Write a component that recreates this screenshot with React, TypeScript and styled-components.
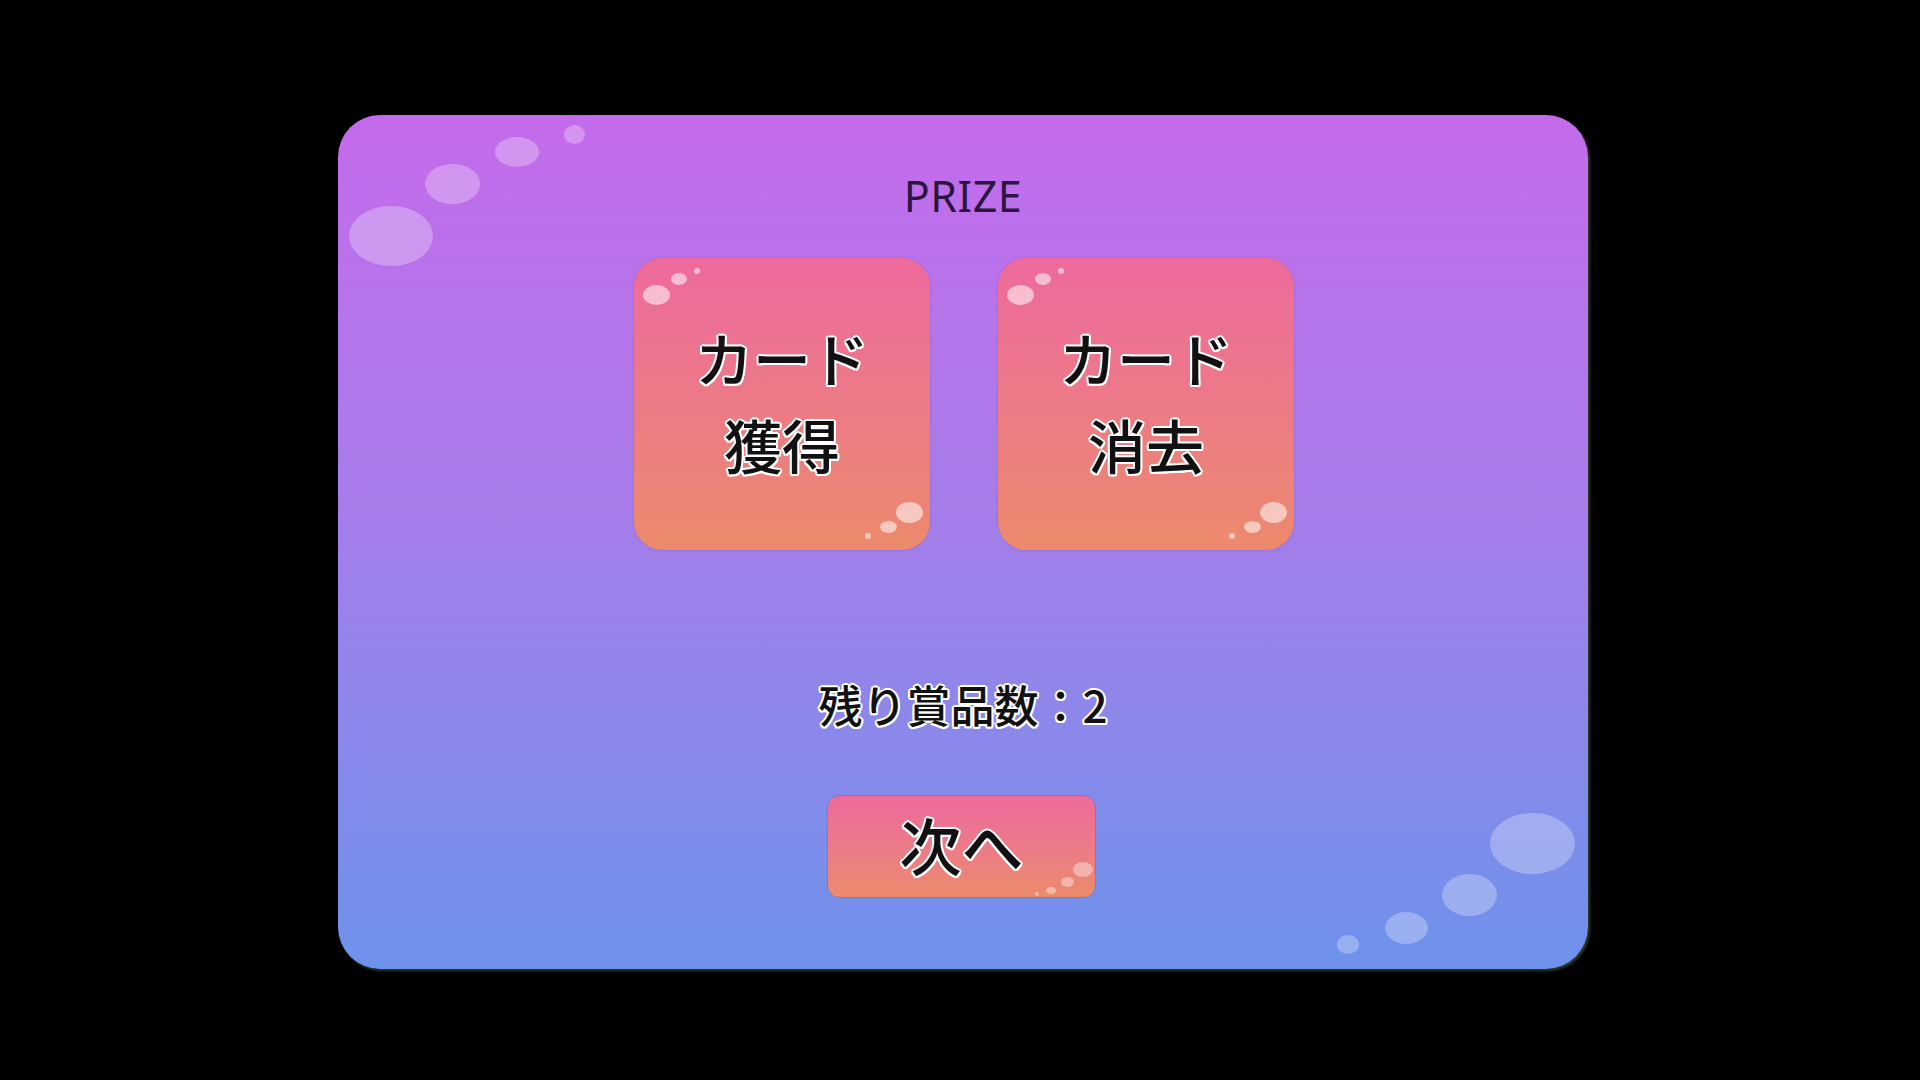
import styled, { createGlobalStyle } from 'styled-components';

const GlobalStyle = createGlobalStyle`
  html, body {
    margin: 0;
    padding: 0;
    background: #000;
  }
  body {
    font-family: 'Noto Sans CJK JP', 'Noto Sans', sans-serif;
  }
`;

const outline = `
  text-shadow:
    2px 0 0 #fff, -2px 0 0 #fff, 0 2px 0 #fff, 0 -2px 0 #fff,
    1.5px 1.5px 0 #fff, -1.5px 1.5px 0 #fff, 1.5px -1.5px 0 #fff, -1.5px -1.5px 0 #fff,
    0 0 3px #fff;
`;

const Screen = styled.div`
  width: 1920px;
  height: 1080px;
  display: flex;
  align-items: center;
  justify-content: center;
  background: #000;
  overflow: hidden;
`;

const Panel = styled.div`
  position: relative;
  width: 1250px;
  height: 854px;
  margin-top: 4px;
  margin-left: 6px;
  border-radius: 42px;
  background: linear-gradient(180deg, #c46beb 0%, #a77ce9 45%, #8b88ea 72%, #6d92ec 100%);
  box-shadow: 2px 2px 3px rgba(90, 110, 70, 0.55);
  display: flex;
  flex-direction: column;
  align-items: center;
  padding-top: 55px;
  box-sizing: border-box;
  overflow: hidden;
`;

const Bubble = styled.div<{ $x: number; $y: number; $w: number; $h: number; $alpha?: number }>`
  position: absolute;
  left: ${({ $x }) => $x}px;
  top: ${({ $y }) => $y}px;
  width: ${({ $w }) => $w}px;
  height: ${({ $h }) => $h}px;
  border-radius: 50%;
  background: rgba(255, 255, 255, ${({ $alpha }) => $alpha ?? 0.28});
  pointer-events: none;
`;

const Title = styled.div`
  font-family: 'Noto Sans', 'Open Sans', sans-serif;
  font-size: 43px;
  line-height: 52px;
  color: #2b1640;
  letter-spacing: 0.5px;
  position: relative;
`;

const CardRow = styled.div`
  display: flex;
  gap: 68px;
  margin-top: 36px;
  margin-left: 2px;
`;

const Card = styled.button`
  position: relative;
  width: 296px;
  height: 292px;
  border: none;
  border-radius: 28px;
  background: linear-gradient(180deg, #ed6a9c 0%, #ec7a87 50%, #ec8a6c 100%);
  box-shadow: 0 0 2px rgba(80, 50, 110, 0.35);
  display: flex;
  flex-direction: column;
  align-items: center;
  justify-content: center;
  padding: 0 0 6px;
  cursor: pointer;
  font-family: 'Noto Sans CJK JP', sans-serif;
  overflow: hidden;
`;

const CardLine = styled.span`
  font-size: 58px;
  font-weight: 500;
  line-height: 87px;
  color: #111;
  ${outline}
`;

const Remaining = styled.div`
  margin-top: 124px;
  font-size: 44px;
  font-weight: 500;
  line-height: 60px;
  color: #111;
  ${outline}
`;

const NextButton = styled.button`
  position: relative;
  margin-top: 61px;
  margin-left: -3px;
  width: 269px;
  height: 103px;
  border: 1px solid #5d86d6;
  border-radius: 12px;
  background: linear-gradient(180deg, #ed6a9c 0%, #ec7c86 55%, #ec8b6c 100%);
  display: flex;
  align-items: center;
  justify-content: center;
  cursor: pointer;
  font-family: 'Noto Sans CJK JP', sans-serif;
  font-size: 62px;
  font-weight: 500;
  color: #111;
  padding: 0 0 6px;
  overflow: hidden;
  ${outline}
`;

const cardBubbles = [
  { x: 9, y: 27, w: 27, h: 20, a: 0.55 },
  { x: 37, y: 15, w: 16, h: 12, a: 0.55 },
  { x: 60, y: 10, w: 6, h: 6, a: 0.55 },
  { x: 262, y: 244, w: 27, h: 21, a: 0.55 },
  { x: 246, y: 263, w: 17, h: 12, a: 0.55 },
  { x: 231, y: 275, w: 6, h: 6, a: 0.55 },
];

const nextBubbles = [
  { x: 245, y: 66, w: 20, h: 15 },
  { x: 233, y: 81, w: 13, h: 10 },
  { x: 218, y: 91, w: 10, h: 7 },
  { x: 207, y: 96, w: 4, h: 4 },
];

const panelBubbles = [
  { x: 11, y: 91, w: 84, h: 60 },
  { x: 87, y: 49, w: 55, h: 40 },
  { x: 157, y: 22, w: 44, h: 30 },
  { x: 226, y: 10, w: 21, h: 19 },
  { x: 1152, y: 698, w: 85, h: 61 },
  { x: 1104, y: 759, w: 55, h: 42 },
  { x: 1047, y: 797, w: 43, h: 32 },
  { x: 999, y: 820, w: 22, h: 19 },
];

const cards = [
  ['カード', '獲得'],
  ['カード', '消去'],
];

const App = () => {
  return (
    <>
      <GlobalStyle />
      <Screen>
        <Panel>
          {panelBubbles.map((b, i) => (
            <Bubble key={i} $x={b.x} $y={b.y} $w={b.w} $h={b.h} />
          ))}
          <Title>PRIZE</Title>
          <CardRow>
            {cards.map((lines) => (
              <Card key={lines.join('')}>
                {cardBubbles.map((b, i) => (
                  <Bubble key={i} $x={b.x} $y={b.y} $w={b.w} $h={b.h} $alpha={b.a} />
                ))}
                {lines.map((line) => (
                  <CardLine key={line}>{line}</CardLine>
                ))}
              </Card>
            ))}
          </CardRow>
          <Remaining>残り賞品数：2</Remaining>
          <NextButton>
            {nextBubbles.map((b, i) => (
              <Bubble key={i} $x={b.x} $y={b.y} $w={b.w} $h={b.h} $alpha={0.4} />
            ))}
            次へ
          </NextButton>
        </Panel>
      </Screen>
    </>
  );
};

export default App;
